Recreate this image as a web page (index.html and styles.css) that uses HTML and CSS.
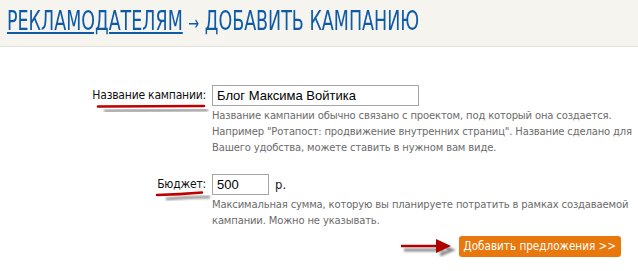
FILE: index.html
```html
<!DOCTYPE html>
<html>
<head>
<meta charset="utf-8">
<link rel="stylesheet" href="styles.css">
</head>
<body>
<div class="header">
  <h1 class="title"><a class="crumb" href="#">РЕКЛАМОДАТЕЛЯМ</a> <span class="arrow">→</span> ДОБАВИТЬ КАМПАНИЮ</h1>
</div>
<div class="form">
  <div class="row row-name">
    <label class="label">Название кампании:
      <svg class="mark mark-name" width="120" height="10" viewBox="0 0 120 10">
        <defs><filter id="b1" x="-10%" y="-100%" width="120%" height="300%"><feGaussianBlur stdDeviation="1.2"/></filter></defs>
        <path d="M10 7 L114 6" stroke="#9a9a9a" stroke-width="3" fill="none" filter="url(#b1)"/>
        <path d="M4 2.5 L110 2" stroke="#c00000" stroke-width="2.6" fill="none" stroke-linecap="round"/>
      </svg>
    </label>
    <div class="field">
      <input class="input input-wide" type="text" value="Блог Максима Войтика">
      <p class="hint">Название кампании обычно связано с проектом, под который она создается.<br>Например "Ротапост: продвижение внутренних страниц". Название сделано для<br>Вашего удобства, можете ставить в нужном вам виде.</p>
    </div>
  </div>
  <div class="row row-budget">
    <label class="label">Бюджет:
      <svg class="mark mark-budget" width="60" height="12" viewBox="0 0 60 12">
        <defs><filter id="b2" x="-10%" y="-100%" width="120%" height="300%"><feGaussianBlur stdDeviation="1.2"/></filter></defs>
        <path d="M12 8 Q35 6 56 6" stroke="#9a9a9a" stroke-width="3" fill="none" filter="url(#b2)"/>
        <path d="M3 4 Q25 3.5 48 1.5" stroke="#c00000" stroke-width="2.4" fill="none" stroke-linecap="round"/>
      </svg>
    </label>
    <div class="field">
      <div class="inline"><input class="input input-small" type="text" value="500"><span class="unit">р.</span></div>
      <p class="hint">Максимальная сумма, которую вы планируете потратить в рамках создаваемой<br>кампании. Можно не указывать.</p>
    </div>
  </div>
  <div class="actions">
    <svg class="pointer" width="56" height="20" viewBox="0 0 56 20">
      <defs><filter id="b3" x="-10%" y="-50%" width="120%" height="200%"><feGaussianBlur stdDeviation="1.3"/></filter></defs>
      <path d="M4 13 L44 13 M40 8 L52 13 L40 18" stroke="#8a8a8a" stroke-width="3" fill="none" filter="url(#b3)"/>
      <path d="M1 9 L40 9" stroke="#b00000" stroke-width="2.6" fill="none"/>
      <path d="M36 2 L51 9 L36 16 Z" fill="#b00000"/>
    </svg>
    <button class="btn" type="button">Добавить предложения &gt;&gt;</button>
  </div>
</div>
</body>
</html>
```
FILE: styles.css
```css
html, body {
  margin: 0;
  padding: 0;
  background: #fff;
}
body {
  font-family: "DejaVu Sans", Verdana, sans-serif;
  color: #222;
}
.header {
  height: 47px;
  background: #f5f4ee;
  border-bottom: 1px solid #e2e1dc;
  box-sizing: border-box;
  overflow: hidden;
}
.title {
  display: inline-block;
  margin: 0;
  padding: 5px 0 0 7px;
  font-family: "DejaVu Sans Condensed", "DejaVu Sans", sans-serif;
  font-weight: normal;
  font-size: 27px;
  line-height: 32px;
  color: #0e5aa6;
  white-space: nowrap;
  transform: scaleX(0.72);
  transform-origin: 7px 0;
}
.crumb {
  color: #0e5aa6;
  text-decoration: underline;
  text-decoration-thickness: 2px;
  text-underline-offset: 2px;
}
.arrow {
  font-size: 20px;
}
.form {
  padding-top: 38px;
}
.row {
  display: grid;
  grid-template-columns: 212px 1fr;
}
.row-budget {
  margin-top: 18px;
}
.label {
  position: relative;
  justify-self: end;
  padding-right: 6px;
  font-family: "DejaVu Sans Condensed", "DejaVu Sans", sans-serif;
  font-size: 12px;
  line-height: 21px;
  color: #111;
  white-space: nowrap;
  letter-spacing: -0.2px;
}
.mark {
  position: absolute;
  left: 0;
  top: 19px;
  overflow: visible;
}
.mark-name { left: 2px; }
.mark-budget { left: -3px; top: 17px; }
.field {
  display: flex;
  flex-direction: column;
}
.inline {
  display: flex;
  align-items: center;
  gap: 6px;
}
.input {
  box-sizing: border-box;
  height: 21px;
  border: 1px solid #a5a5a5;
  padding: 0 4px;
  font-family: "Liberation Sans", Arial, sans-serif;
  font-size: 13px;
  color: #000;
  background: #fff;
  outline: none;
}
.input-wide { width: 207px; }
.input-small { width: 57px; }
.unit {
  font-family: "DejaVu Sans Condensed", "DejaVu Sans", sans-serif;
  font-size: 13px;
  color: #222;
}
.hint {
  margin: 2px 0 0;
  font-family: "DejaVu Sans", Verdana, sans-serif;
  font-size: 10px;
  line-height: 16px;
  color: #6b6b6b;
  white-space: nowrap;
  letter-spacing: -0.15px;
}
.actions {
  display: flex;
  justify-content: flex-end;
  align-items: center;
  gap: 3px;
  padding-right: 17px;
  margin-top: 7px;
}
.pointer {
  overflow: visible;
}
.btn {
  height: 21px;
  padding: 0 5px;
  border: none;
  border-radius: 3px;
  background: #e8780c;
  color: #fff;
  font-family: "DejaVu Sans Condensed", "DejaVu Sans", sans-serif;
  font-size: 11.6px;
  line-height: 21px;
  white-space: nowrap;
  cursor: pointer;
}
```
